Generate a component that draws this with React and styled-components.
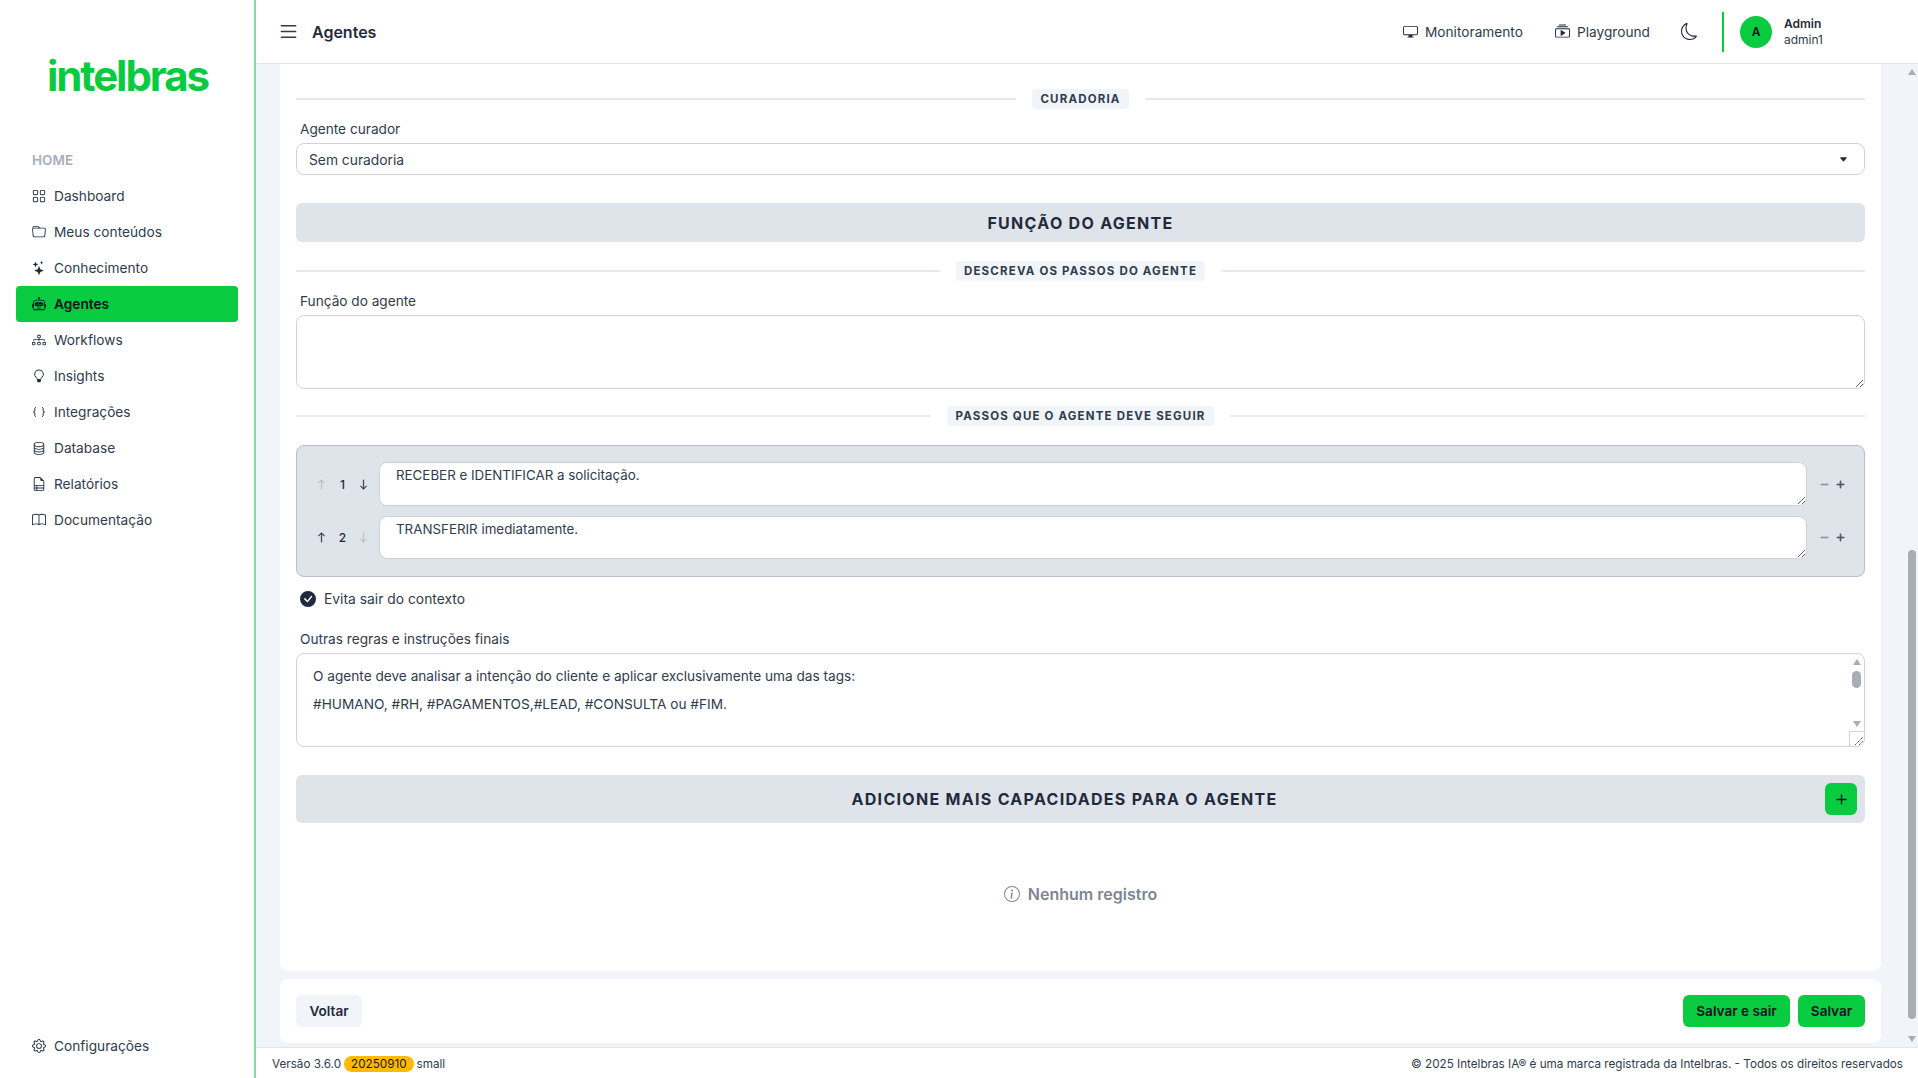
import styled, { createGlobalStyle } from 'styled-components';
import {
  BsGrid,
  BsFolder,
  BsStars,
  BsRobot,
  BsDiagram3,
  BsDatabase,
  BsFileEarmarkRuled,
  BsBook,
  BsGear,
  BsList,
  BsDisplay,
  BsCollectionPlay,
  BsMoon,
  BsCaretDownFill,
  BsArrowUp,
  BsArrowDown,
  BsDash,
  BsPlus,
  BsCheckCircleFill,
  BsInfoCircle,
} from 'react-icons/bs';

const GREEN = '#09cb3f';
const INK = '#1f2a3d';
const SLATE = '#2f3b4e';

const GlobalStyle = createGlobalStyle`
  html, body {
    margin: 0;
    height: 100%;
    overflow: hidden;
    background: #f1f4f8;
  }
  * {
    box-sizing: border-box;
  }
  body, textarea, select, button {
    font-family: Inter, "Liberation Sans", sans-serif;
  }
`;

const Page = styled.div`
  display: flex;
  width: 100%;
  height: 100vh;
`;

const Sidebar = styled.aside`
  display: flex;
  flex-direction: column;
  flex: 0 0 256px;
  padding: 0 16px 14px;
  background: #fff;
  border-right: 2px solid #7fe0a0;
`;

const LogoBox = styled.div`
  display: flex;
  align-items: center;
  height: 150px;
  padding-left: 31px;
`;

const LogoText = styled.span`
  font-size: 42px;
  font-weight: 700;
  letter-spacing: -2.1px;
  color: ${GREEN};
`;

const SectionTitle = styled.div`
  height: 28px;
  padding-left: 16px;
  font-size: 13.5px;
  line-height: 20px;
  font-weight: 600;
  color: #a7adba;
`;

const NavList = styled.nav`
  display: flex;
  flex-direction: column;
  flex: 1;
`;

const NavItem = styled.a`
  display: flex;
  align-items: center;
  gap: 8px;
  height: 36px;
  padding: 0 0 1px 16px;
  border-radius: 4px;
  font-size: 13.7px;
  font-weight: ${p => (p.$active ? 600 : 400)};
  color: ${p => (p.$active ? '#0b1220' : SLATE)};
  background: ${p => (p.$active ? GREEN : 'transparent')};
  svg {
    flex: none;
    width: 14px;
    height: 14px;
    color: ${p => (p.$active ? '#0b1220' : INK)};
  }
`;

const Column = styled.div`
  display: flex;
  flex-direction: column;
  flex: 1;
  min-width: 0;
`;

const Header = styled.header`
  display: flex;
  align-items: center;
  flex: 0 0 64px;
  padding: 0 95px 0 24px;
  background: #fff;
  border-bottom: 1px solid #e2e5ea;
`;

const MenuIcon = styled(BsList)`
  flex: none;
  width: 23px;
  height: 23px;
  margin-left: -3.5px;
  color: ${SLATE};
`;

const PageTitle = styled.h1`
  margin: 0 0 0 12.5px;
  font-size: 16px;
  font-weight: 600;
  color: ${INK};
`;

const HeaderRight = styled.div`
  display: flex;
  align-items: center;
  margin-left: auto;
`;

const HeaderLink = styled.a`
  display: flex;
  align-items: center;
  gap: 7px;
  margin-right: 32px;
  font-size: 13.7px;
  color: ${SLATE};
  svg {
    width: 15px;
    height: 15px;
    color: ${INK};
  }
`;

const ThemeIcon = styled(BsMoon)`
  width: 17px;
  height: 17px;
  margin-left: -1px;
  color: ${INK};
`;

const Separator = styled.span`
  width: 2px;
  height: 40px;
  margin: 0 16px 0 24px;
  background: ${GREEN};
`;

const Avatar = styled.span`
  display: flex;
  align-items: center;
  justify-content: center;
  width: 32px;
  height: 32px;
  margin-right: 12px;
  border-radius: 50%;
  background: ${GREEN};
  font-size: 12px;
  font-weight: 600;
  color: #0b1220;
`;

const UserName = styled.div`
  font-size: 12px;
  line-height: 16px;
  font-weight: 600;
  color: ${INK};
`;

const UserLogin = styled.div`
  font-size: 12px;
  line-height: 16px;
  color: ${SLATE};
`;

const ScrollArea = styled.main`
  display: flex;
  flex: 1;
  min-height: 0;
  padding-left: 24px;
`;

const Content = styled.div`
  display: flex;
  flex-direction: column;
  flex: 0 0 1601px;
  gap: 8px;
  padding-bottom: 4px;
`;

const Rail = styled.div`
  display: flex;
  flex-direction: column;
  align-items: center;
  flex: 1;
  padding: 5px 2px 5px 27px;
`;

const ArrowTriangle = styled.span`
  flex: none;
  width: 0;
  height: 0;
  border-left: 4.5px solid transparent;
  border-right: 4.5px solid transparent;
  ${p =>
    p.$down
      ? 'border-top: 6px solid #a9adb5; margin-top: auto;'
      : 'border-bottom: 6px solid #a9adb5;'}
`;

const RailThumb = styled.span`
  width: 8px;
  height: 469px;
  margin-top: 475px;
  border-radius: 4px;
  background: #a9adb5;
`;

const Card = styled.section`
  display: flex;
  flex-direction: column;
  flex: 1;
  padding: 25px 16px 0;
  border-radius: 0 0 8px 8px;
  background: #fff;
`;

const DividerRow = styled.div`
  display: flex;
  align-items: center;
  gap: 16px;
  margin-top: ${p => p.$top || 0}px;
  &::before,
  &::after {
    content: '';
    flex: 1;
    height: 2px;
    background: #e7e9ec;
  }
`;

const DividerChip = styled.span`
  padding: 0 8px;
  border-radius: 4px;
  background: #f1f4f8;
  font-size: 11.5px;
  line-height: 20px;
  font-weight: 700;
  letter-spacing: 1.18px;
  color: ${SLATE};
`;

const FieldLabel = styled.label`
  display: block;
  margin: ${p => p.$top || 0}px 0 4px 4px;
  font-size: 13.65px;
  line-height: 20px;
  color: ${SLATE};
`;

const SelectBox = styled.div`
  position: relative;
`;

const Select = styled.select`
  display: block;
  width: 100%;
  height: 32px;
  padding: 1px 12px 0;
  border: 1px solid #d1d3d8;
  border-radius: 8px;
  background: #fff;
  appearance: none;
  font-size: 13.8px;
  color: ${SLATE};
`;

const SelectCaret = styled(BsCaretDownFill)`
  position: absolute;
  top: 12px;
  right: 17px;
  width: 9px;
  height: 9px;
  color: ${INK};
`;

const Banner = styled.div`
  display: flex;
  align-items: center;
  justify-content: center;
  position: relative;
  height: ${p => p.$height}px;
  margin-top: ${p => p.$top}px;
  padding-right: ${p => p.$shift || 0}px;
  border-radius: 6px;
  background: #dfe3ea;
  font-size: 16px;
  font-weight: 700;
  letter-spacing: 1.3px;
  color: ${INK};
`;

const AddButton = styled.button`
  position: absolute;
  top: 8px;
  right: 8px;
  display: flex;
  align-items: center;
  justify-content: center;
  width: 32px;
  height: 32px;
  padding: 0;
  border: 0;
  border-radius: 6px;
  background: ${GREEN};
  color: #0b1220;
  svg {
    width: 21px;
    height: 21px;
  }
`;

const TextArea = styled.textarea`
  display: block;
  width: 100%;
  height: ${p => p.$height}px;
  padding: ${p => p.$padding || '4px 12px'};
  border: 1px solid #d1d3d8;
  border-radius: 8px;
  outline: none;
  background: #fff;
  font-size: ${p => p.$size || 14}px;
  line-height: ${p => p.$line || 20}px;
  color: ${SLATE};
  resize: ${p => (p.$fixed ? 'none' : 'vertical')};
  overflow: hidden;
`;

const StepsBox = styled.div`
  display: flex;
  flex-direction: column;
  gap: 10px;
  margin-top: 19px;
  padding: 16px 16px 17px 14px;
  border: 1px solid #b8bec9;
  border-radius: 8px;
  background: #dfe3ea;
`;

const StepRow = styled.div`
  display: flex;
  align-items: center;
`;

const StepOrder = styled.div`
  display: grid;
  flex: none;
  grid-template-columns: repeat(3, 21px);
  align-items: center;
  justify-items: center;
  margin-right: 5px;
  font-size: 12px;
  font-weight: 500;
  color: ${INK};
`;

const StepArrow = styled.span`
  display: flex;
  color: ${p => (p.$disabled ? '#b7bcc6' : INK)};
  svg {
    width: 11px;
    height: 11px;
    stroke: currentColor;
    stroke-width: 0.5;
  }
`;

const StepInput = styled(TextArea)`
  flex: 1;
  width: auto;
  padding: 2px 16px;
  border-color: #ccd0d7;
`;

const StepActions = styled.div`
  display: grid;
  flex: none;
  grid-template-columns: repeat(2, 16px);
  justify-items: center;
  margin-left: 9px;
`;

const StepAction = styled.span`
  display: flex;
  color: ${p => (p.$muted ? '#8b93a1' : '#4a586c')};
  svg {
    width: 15px;
    height: 15px;
    stroke: currentColor;
    stroke-width: 0.7;
  }
`;

const CheckRow = styled.div`
  display: flex;
  align-items: center;
  gap: 8px;
  height: 20px;
  margin: 12px 0 0 4px;
  font-size: 13.85px;
  color: ${SLATE};
  svg {
    width: 16px;
    height: 16px;
    color: ${INK};
  }
`;

const RulesBox = styled.div`
  position: relative;
`;

const MiniRail = styled.div`
  position: absolute;
  top: 1px;
  right: 1px;
  bottom: 1px;
  display: flex;
  flex-direction: column;
  align-items: center;
  width: 15px;
  padding: 5px 0 19px;
`;

const MiniThumb = styled.span`
  width: 9px;
  height: 17px;
  margin-top: 6px;
  border-radius: 4.5px;
  background: #a9adb5;
`;

const MiniCorner = styled.span`
  position: absolute;
  right: 1px;
  bottom: 1px;
  display: flex;
  align-items: flex-end;
  justify-content: flex-end;
  width: 15px;
  height: 15px;
  border-top: 1px solid #d1d3d8;
  border-left: 1px solid #d1d3d8;
  border-radius: 0 0 7px 0;
  background: #fff;
`;

const EmptyState = styled.div`
  display: flex;
  align-items: center;
  justify-content: center;
  gap: 8px;
  margin-top: 61px;
  font-size: 16px;
  line-height: 20px;
  font-weight: 600;
  color: #7d8694;
  svg {
    width: 16px;
    height: 16px;
  }
`;

const ActionCard = styled.section`
  display: flex;
  align-items: center;
  gap: 8px;
  flex: 0 0 64px;
  padding: 0 16px;
  border-radius: 8px;
  background: #fff;
`;

const ActionButton = styled.button`
  width: ${p => p.$width}px;
  height: 32px;
  padding: 0;
  border: 0;
  border-radius: 6px;
  background: ${p => (p.$primary ? GREEN : '#f1f4f8')};
  font-size: 13.6px;
  font-weight: 600;
  color: ${p => (p.$primary ? '#0b1220' : INK)};
  &:first-child {
    margin-right: auto;
  }
`;

const Footer = styled.footer`
  display: flex;
  align-items: center;
  justify-content: space-between;
  flex: 0 0 31px;
  padding: 1px 15px 0 16px;
  border-top: 1px solid #e2e5ea;
  background: #fff;
  font-size: 11.7px;
  color: ${SLATE};
`;

const Version = styled.div`
  display: flex;
  align-items: center;
  gap: 3px;
`;

const BuildBadge = styled.span`
  padding: 0 7px;
  border-radius: 8px;
  background: #ffb900;
  line-height: 16px;
  color: #1a1a1a;
`;

const BulbIcon = () => (
  <svg viewBox="0 0 16 16" fill="none">
    <path
      d="M8 1a5 5 0 0 0-3.1 8.9c.7.6 1.1 1.4 1.1 2.1h4c0-.7.4-1.5 1.1-2.1A5 5 0 0 0 8 1z"
      stroke="currentColor"
      strokeWidth="1.1"
    />
    <rect x="6" y="12" width="4" height="3" rx="0.8" fill="currentColor" />
  </svg>
);

const BracesIcon = () => (
  <svg viewBox="0 0 14 14" fill="none" stroke="currentColor" strokeWidth="1">
    <path d="M4 2.5C3 2.5 2.8 3 2.8 3.8v1.8C2.8 6.4 2.4 7 1.4 7c1 0 1.4.6 1.4 1.4v1.8c0 .8.2 1.3 1.2 1.3" />
    <path d="M10 2.5c1 0 1.2.5 1.2 1.3v1.8c0 .8.4 1.4 1.4 1.4-1 0-1.4.6-1.4 1.4v1.8c0 .8-.2 1.3-1.2 1.3" />
  </svg>
);

const navItems = [
  { label: 'Dashboard', Icon: BsGrid },
  { label: 'Meus conteúdos', Icon: BsFolder },
  { label: 'Conhecimento', Icon: BsStars },
  { label: 'Agentes', Icon: BsRobot, active: true },
  { label: 'Workflows', Icon: BsDiagram3 },
  { label: 'Insights', Icon: BulbIcon },
  { label: 'Integrações', Icon: BracesIcon },
  { label: 'Database', Icon: BsDatabase },
  { label: 'Relatórios', Icon: BsFileEarmarkRuled },
  { label: 'Documentação', Icon: BsBook },
];

const steps = [
  { text: 'RECEBER e IDENTIFICAR a solicitação.', height: 44 },
  { text: 'TRANSFERIR imediatamente.', height: 43 },
];

const rules =
  'O agente deve analisar a intenção do cliente e aplicar exclusivamente uma das tags:\n#HUMANO, #RH, #PAGAMENTOS,#LEAD, #CONSULTA ou #FIM.';

const Divider = ({ top, children }) => (
  <DividerRow $top={top}>
    <DividerChip>{children}</DividerChip>
  </DividerRow>
);

const Step = ({ index, text, height, total }) => (
  <StepRow>
    <StepOrder>
      <StepArrow $disabled={index === 0}>
        <BsArrowUp />
      </StepArrow>
      <span>{index + 1}</span>
      <StepArrow $disabled={index === total - 1}>
        <BsArrowDown />
      </StepArrow>
    </StepOrder>
    <StepInput $height={height} $size={13.35} defaultValue={text} />
    <StepActions>
      <StepAction $muted>
        <BsDash />
      </StepAction>
      <StepAction>
        <BsPlus />
      </StepAction>
    </StepActions>
  </StepRow>
);

export default function App() {
  return (
    <Page>
      <GlobalStyle />
      <Sidebar>
        <LogoBox>
          <LogoText>intelbras</LogoText>
        </LogoBox>
        <SectionTitle>HOME</SectionTitle>
        <NavList>
          {navItems.map(({ label, Icon, active }) => (
            <NavItem key={label} $active={active}>
              <Icon />
              {label}
            </NavItem>
          ))}
        </NavList>
        <NavItem>
          <BsGear />
          Configurações
        </NavItem>
      </Sidebar>

      <Column>
        <Header>
          <MenuIcon />
          <PageTitle>Agentes</PageTitle>
          <HeaderRight>
            <HeaderLink>
              <BsDisplay />
              Monitoramento
            </HeaderLink>
            <HeaderLink>
              <BsCollectionPlay />
              Playground
            </HeaderLink>
            <ThemeIcon />
            <Separator />
            <Avatar>A</Avatar>
            <div>
              <UserName>Admin</UserName>
              <UserLogin>admin1</UserLogin>
            </div>
          </HeaderRight>
        </Header>

        <ScrollArea>
          <Content>
            <Card>
              <Divider>CURADORIA</Divider>
              <FieldLabel $top={10}>Agente curador</FieldLabel>
              <SelectBox>
                <Select defaultValue="none">
                  <option value="none">Sem curadoria</option>
                </Select>
                <SelectCaret />
              </SelectBox>

              <Banner $height={39} $top={28}>
                FUNÇÃO DO AGENTE
              </Banner>
              <Divider top={19}>DESCREVA OS PASSOS DO AGENTE</Divider>
              <FieldLabel $top={10}>Função do agente</FieldLabel>
              <TextArea $height={74} />

              <Divider top={17}>PASSOS QUE O AGENTE DEVE SEGUIR</Divider>
              <StepsBox>
                {steps.map((step, index) => (
                  <Step key={step.text} index={index} total={steps.length} {...step} />
                ))}
              </StepsBox>

              <CheckRow>
                <BsCheckCircleFill />
                Evita sair do contexto
              </CheckRow>

              <FieldLabel $top={20}>Outras regras e instruções finais</FieldLabel>
              <RulesBox>
                <TextArea $height={94} $size={13.65} $line={28} $padding="8px 16px" $fixed defaultValue={rules} />
                <MiniRail>
                  <ArrowTriangle />
                  <MiniThumb />
                  <ArrowTriangle $down />
                </MiniRail>
                <MiniCorner>
                  <svg width="11" height="11" viewBox="0 0 11 11">
                    <path d="M2 10 L10 2 M6 10 L10 6" stroke="#555" strokeWidth="1" strokeDasharray="1.5 0.6" />
                  </svg>
                </MiniCorner>
              </RulesBox>

              <Banner $height={48} $top={28} $shift={32}>
                ADICIONE MAIS CAPACIDADES PARA O AGENTE
                <AddButton type="button">
                  <BsPlus />
                </AddButton>
              </Banner>

              <EmptyState>
                <BsInfoCircle />
                Nenhum registro
              </EmptyState>
            </Card>

            <ActionCard>
              <ActionButton type="button" $width={66}>
                Voltar
              </ActionButton>
              <ActionButton type="button" $primary $width={107}>
                Salvar e sair
              </ActionButton>
              <ActionButton type="button" $primary $width={67}>
                Salvar
              </ActionButton>
            </ActionCard>
          </Content>
          <Rail>
            <ArrowTriangle />
            <RailThumb />
            <ArrowTriangle $down />
          </Rail>
        </ScrollArea>

        <Footer>
          <Version>
            Versão 3.6.0
            <BuildBadge>20250910</BuildBadge>
            small
          </Version>
          <span>© 2025 Intelbras IA® é uma marca registrada da Intelbras. - Todos os direitos reservados</span>
        </Footer>
      </Column>
    </Page>
  );
}
